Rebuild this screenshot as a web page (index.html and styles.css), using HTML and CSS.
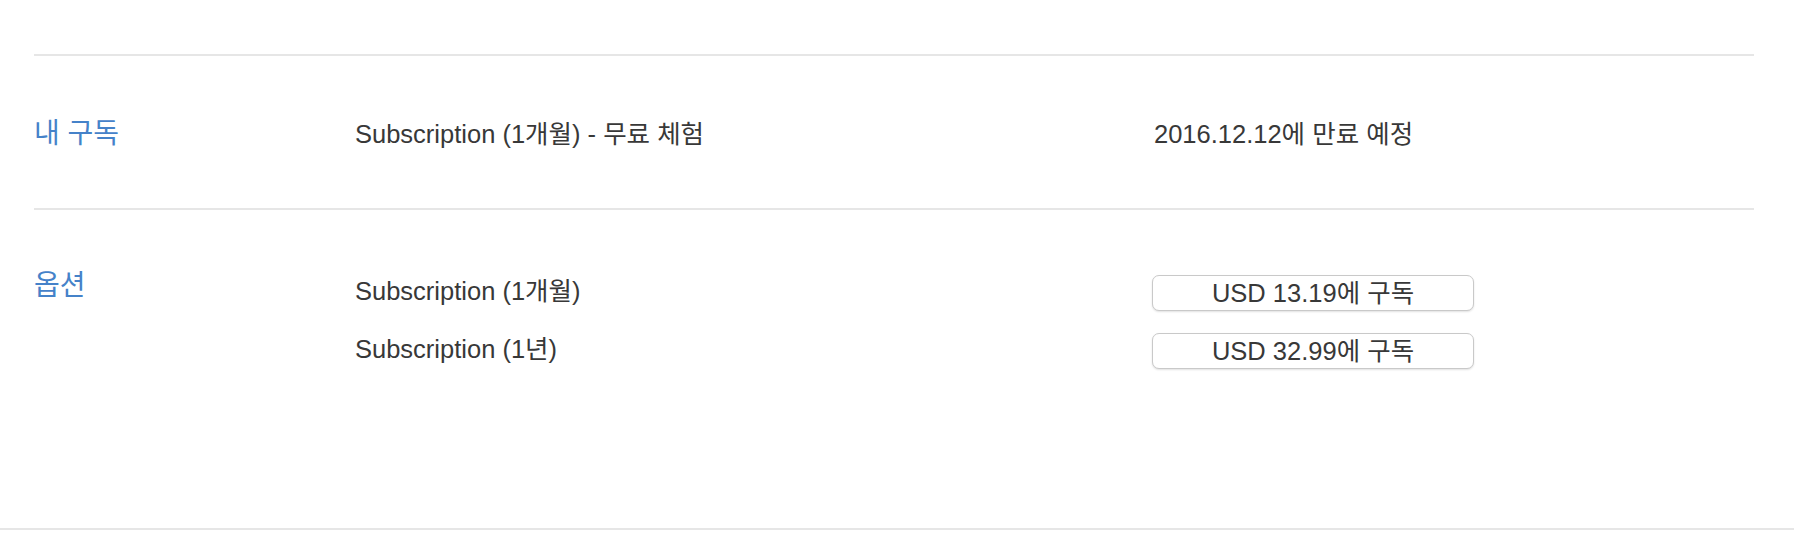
FILE: index.html
```html
<!DOCTYPE html>
<html lang="ko">
<head>
<meta charset="utf-8">
<title>구독</title>
<link rel="stylesheet" href="styles.css">
</head>
<body>
<div class="container">
  <section class="section current">
    <h2 class="label">내 구독</h2>
    <div class="name">Subscription (1개월) - 무료 체험</div>
    <div class="status">2016.12.12에 만료 예정</div>
  </section>
  <section class="section options">
    <h2 class="label">옵션</h2>
    <div class="option-list">
      <div class="option">
        <div class="name">Subscription (1개월)</div>
        <button class="buy">USD 13.19에 구독</button>
      </div>
      <div class="option">
        <div class="name">Subscription (1년)</div>
        <button class="buy">USD 32.99에 구독</button>
      </div>
    </div>
  </section>
</div>
<div class="page-rule"></div>
</body>
</html>
```

FILE: styles.css
```css
html, body {
  margin: 0;
  padding: 0;
  background: #ffffff;
}

body {
  font-family: "Liberation Sans", Arial, "Noto Sans CJK KR", sans-serif;
  font-size: 25.5px;
  line-height: 30px;
  color: #383838;
}

.container {
  padding: 54px 40px 0 34px;
}

.section {
  display: grid;
  grid-template-columns: 321px 797px 1fr;
  border-top: 2px solid #e6e6e6;
}

.label {
  margin: 0;
  font-size: 28px;
  font-weight: normal;
  line-height: 30px;
  color: #4582c9;
}

.current {
  align-items: center;
  padding: 63px 0 59px;
}

.status {
  padding-left: 2px;
}

.options {
  align-items: start;
  padding: 65px 0 159px;
}

.options .label {
  margin-top: -4px;
}

.option-list {
  grid-column: 2 / 4;
  display: flex;
  flex-direction: column;
  gap: 22px;
}

.option {
  display: grid;
  grid-template-columns: 797px 322px;
  align-items: center;
}

.option .name {
  padding-bottom: 4px;
}

.buy {
  height: 36px;
  padding: 0;
  margin: 0;
  font-family: inherit;
  font-size: 25.5px;
  line-height: 30px;
  color: #383838;
  background: #ffffff;
  border: 1.5px solid #c9c9c9;
  border-radius: 7px;
  box-shadow: 0 1px 2px rgba(0, 0, 0, 0.12);
  text-align: center;
}

.page-rule {
  border-top: 2px solid #e6e6e6;
}
```
